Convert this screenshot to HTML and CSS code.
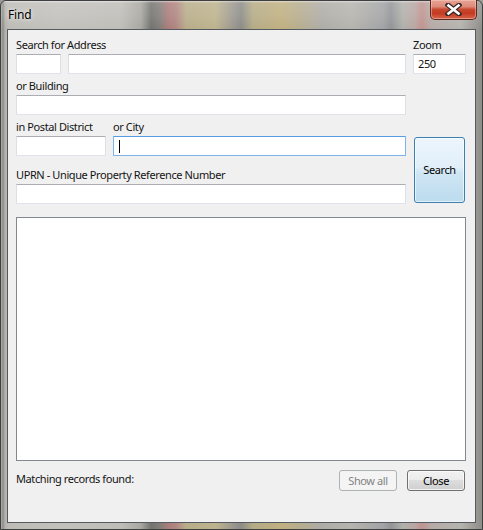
FILE: index.html
```html
<!DOCTYPE html>
<html>
<head>
<meta charset="utf-8">
<title>Find</title>
<link rel="stylesheet" href="styles.css">
</head>
<body>
<div class="window">
  <div class="titlebar">
    <span class="title">Find</span>
    <div class="close-x">
      <svg width="17" height="13" viewBox="0 0 17 13">
        <path d="M3 2 L14 11 M14 2 L3 11" stroke="#3a2a28" stroke-width="5" stroke-linecap="square" fill="none"/>
        <path d="M3.5 2.5 L13.5 10.5 M13.5 2.5 L3.5 10.5" stroke="#ffffff" stroke-width="2.6" stroke-linecap="square" fill="none"/>
      </svg>
    </div>
  </div>
  <div class="client">
    <div class="form">
      <div class="col-left">
        <div class="label">Search for Address</div>
        <div class="row">
          <div class="textbox w-num"></div>
          <div class="textbox grow"></div>
        </div>
        <div class="label gap">or Building</div>
        <div class="textbox"></div>
        <div class="row gap">
          <div class="label w-postal">in Postal District</div>
          <div class="label">or City</div>
        </div>
        <div class="row">
          <div class="textbox w-postal"></div>
          <div class="textbox grow focused"><span class="caret"></span></div>
        </div>
        <div class="label gap-lg">UPRN - Unique Property Reference Number</div>
        <div class="textbox"></div>
      </div>
      <div class="col-right">
        <div class="label">Zoom</div>
        <div class="textbox value">250</div>
        <div class="btn search">Search</div>
      </div>
    </div>
    <div class="listbox"></div>
    <div class="footer">
      <span class="status">Matching records found:</span>
      <div class="buttons">
        <div class="btn disabled">Show all</div>
        <div class="btn">Close</div>
      </div>
    </div>
  </div>
</div>
</body>
</html>
```

FILE: styles.css
```css
html, body {
  margin: 0;
  padding: 0;
  background: #9d9c97;
}

body {
  width: 483px;
  height: 530px;
  overflow: hidden;
  font-family: "Noto Sans", "Liberation Sans", sans-serif;
  font-size: 11px;
  letter-spacing: -0.4px;
  color: #141414;
}

.window {
  box-sizing: border-box;
  width: 483px;
  height: 530px;
  border: 1px solid #3e3f40;
  border-radius: 6px 6px 0 0;
  padding: 0 6px 6px 6px;
  display: flex;
  flex-direction: column;
  background:
    linear-gradient(to bottom, rgba(255,255,255,0.55) 0, rgba(255,255,255,0.15) 2px, rgba(255,255,255,0.1) 14px, rgba(255,255,255,0) 28px),
    linear-gradient(to right,
      #aeada8 0, #8e8c87 2px, #b3b2ad 4px, #bdbcb7 8px,
      #c2c1bc 60px, #bebdb8 120px, #a8a7a1 140px,
      #737370 150px, #807d78 158px, #ad7d7b 168px, #b08682 175px,
      #b8ad8a 185px, #bdb38e 215px, #9c9890 232px, #8c8c88 240px,
      #b5ab86 252px, #c0b081 280px, #b6ad90 300px, #aeaca6 320px,
      #b6b4ae 350px, #a2a3a5 382px, #929497 390px, #b1b0ab 402px,
      #b9a6a2 414px, #c0928f 421px, #b6aaa6 430px, #b5b4af 460px, #8f8e8a 480px);
}

.titlebar {
  height: 28px;
  display: flex;
  align-items: flex-start;
  padding-left: 1px;
}

.title {
  margin-top: 6px;
  font-size: 12px;
  letter-spacing: -0.2px;
  line-height: 15px;
  color: #000;
  text-shadow: 0 0 6px rgba(255,255,255,0.7), 0 0 3px rgba(255,255,255,0.7);
}

.close-x {
  margin-left: auto;
  margin-top: -1px;
  margin-right: -1px;
  box-sizing: border-box;
  width: 47px;
  height: 20px;
  border: 1px solid #5c2a22;
  border-top: none;
  border-radius: 0 0 5px 5px;
  background: linear-gradient(to bottom, #e8a597 0, #dc8a79 35%, #c7472f 50%, #c43a22 70%, #d8654b 100%);
  box-shadow: inset 0 0 0 1px rgba(255,210,200,0.45);
  display: flex;
  align-items: center;
  justify-content: center;
}

.close-x svg {
  display: block;
  margin-top: -1px;
}

.client {
  flex: 1;
  border: 1px solid #555a60;
  background: #f0f0f0;
  padding: 8px 9px 0 8px;
  display: flex;
  flex-direction: column;
}

.form {
  display: flex;
  gap: 7px;
}

.col-left {
  width: 390px;
  display: flex;
  flex-direction: column;
}

.col-right {
  width: 53px;
  display: flex;
  flex-direction: column;
}

.label {
  height: 15px;
  line-height: 13px;
  margin-bottom: 1px;
  white-space: nowrap;
}

.gap { margin-top: 5px; }
.gap-lg { margin-top: 12px; }

.row {
  display: flex;
  gap: 7px;
}

.row.gap .label { margin-bottom: 0; }
.row.gap { margin-bottom: 1px; }

.textbox {
  box-sizing: border-box;
  height: 20px;
  background: #fff;
  border: 1px solid #e2e3ea;
  border-top-color: #abadb3;
  border-left-color: #dbdfe6;
  border-right-color: #dbdfe6;
  border-radius: 1px;
  line-height: 17px;
  padding: 0 4px;
}

.w-num { width: 45px; }
.w-postal { width: 90px; }
.grow { flex: 1; }

.textbox.focused {
  border-color: #7eb4ea;
  border-top-color: #569de5;
  display: flex;
  align-items: center;
  padding-left: 5px;
}

.caret {
  display: block;
  width: 1px;
  height: 13px;
  background: #000;
}

.btn {
  box-sizing: border-box;
  height: 21px;
  width: 58px;
  border: 1px solid #707070;
  border-radius: 3px;
  background: linear-gradient(to bottom, #f2f2f2 0, #ebebeb 45%, #dddddd 50%, #cfcfcf 100%);
  box-shadow: inset 0 0 0 1px rgba(255,255,255,0.7);
  display: flex;
  align-items: center;
  justify-content: center;
  color: #000;
  padding-bottom: 1px;
}

.btn.search {
  margin-top: 63px;
  margin-left: 1px;
  width: 51px;
  height: 66px;
  border-color: #3c7fb1;
  background: linear-gradient(to bottom, #ecf5fc 0, #e1eff9 45%, #cfe6f4 55%, #bbdbee 100%);
  box-shadow: inset 0 0 0 1px rgba(255,255,255,0.6);
  padding-bottom: 1px;
}

.btn.disabled {
  border-color: #adb2b5;
  background: #f4f4f4;
  box-shadow: none;
  color: #838383;
}

.listbox {
  margin-top: 13px;
  box-sizing: border-box;
  height: 244px;
  width: 450px;
  background: #fff;
  border: 1px solid #828790;
}

.footer {
  display: flex;
  align-items: center;
  margin-top: 9px;
  width: 449px;
}

.status {
  line-height: 15px;
  margin-top: -5px;
}

.buttons {
  margin-left: auto;
  display: flex;
  gap: 10px;
}
```
